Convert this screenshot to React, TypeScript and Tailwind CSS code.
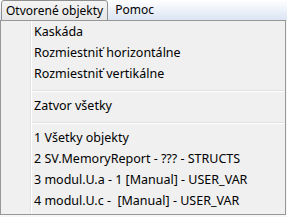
import React from "react";

type Entry = { label: string } | { sep: true };

const entries: Entry[] = [
  { label: "Kaskáda" },
  { label: "Rozmiestniť horizontálne" },
  { label: "Rozmiestniť vertikálne" },
  { sep: true },
  { label: "Zatvor všetky" },
  { sep: true },
  { label: "1 Všetky objekty" },
  { label: "2 SV.MemoryReport - ??? - STRUCTS" },
  { label: "3 modul.U.a - 1 [Manual] - USER_VAR" },
  { label: "4 modul.U.c -  [Manual] - USER_VAR" },
];

export default function App() {
  return (
    <div
      className="w-[287px] h-[217px] bg-[#f7f7f7] overflow-hidden text-[12.5px] text-black"
      style={{ fontFamily: '"Noto Sans", "Open Sans", sans-serif' }}
    >
      {/* menu bar */}
      <div className="h-[21px] flex items-start bg-gradient-to-b from-[#ffffff] to-[#d9e3f3] text-[12px]">
        <div className="ml-[1px] h-[21px] flex items-center px-[4px] border border-[#8e8f8f] rounded-t-[3px] bg-gradient-to-b from-[#f4f4f4] to-[#e6e6e6] whitespace-pre">
          Otvorené objekty
        </div>
        <div className="h-[20px] flex items-center pl-[7px]">Pomoc</div>
      </div>

      {/* dropdown */}
      <div className="relative w-[286px] h-[195px] -mt-[1px] border border-[#979797] bg-[#f0f0f0] py-[1px] flex flex-col">
        <div className="absolute top-0 bottom-0 left-[29px] w-[1px] bg-[#e2e3e3]" />
        <div className="absolute top-0 bottom-0 left-[30px] w-[1px] bg-white" />
        {entries.map((e, i) =>
          "sep" in e ? (
            <div key={i} className="h-[11px] pt-[5px] pl-[31px] pr-[1px]">
              <div className="h-[1px] bg-[#e0e0e0]" />
              <div className="h-[1px] bg-white" />
            </div>
          ) : (
            <div
              key={i}
              className="h-[21px] flex items-center pl-[33px] whitespace-pre leading-none"
            >
              {e.label}
            </div>
          )
        )}
      </div>
    </div>
  );
}
